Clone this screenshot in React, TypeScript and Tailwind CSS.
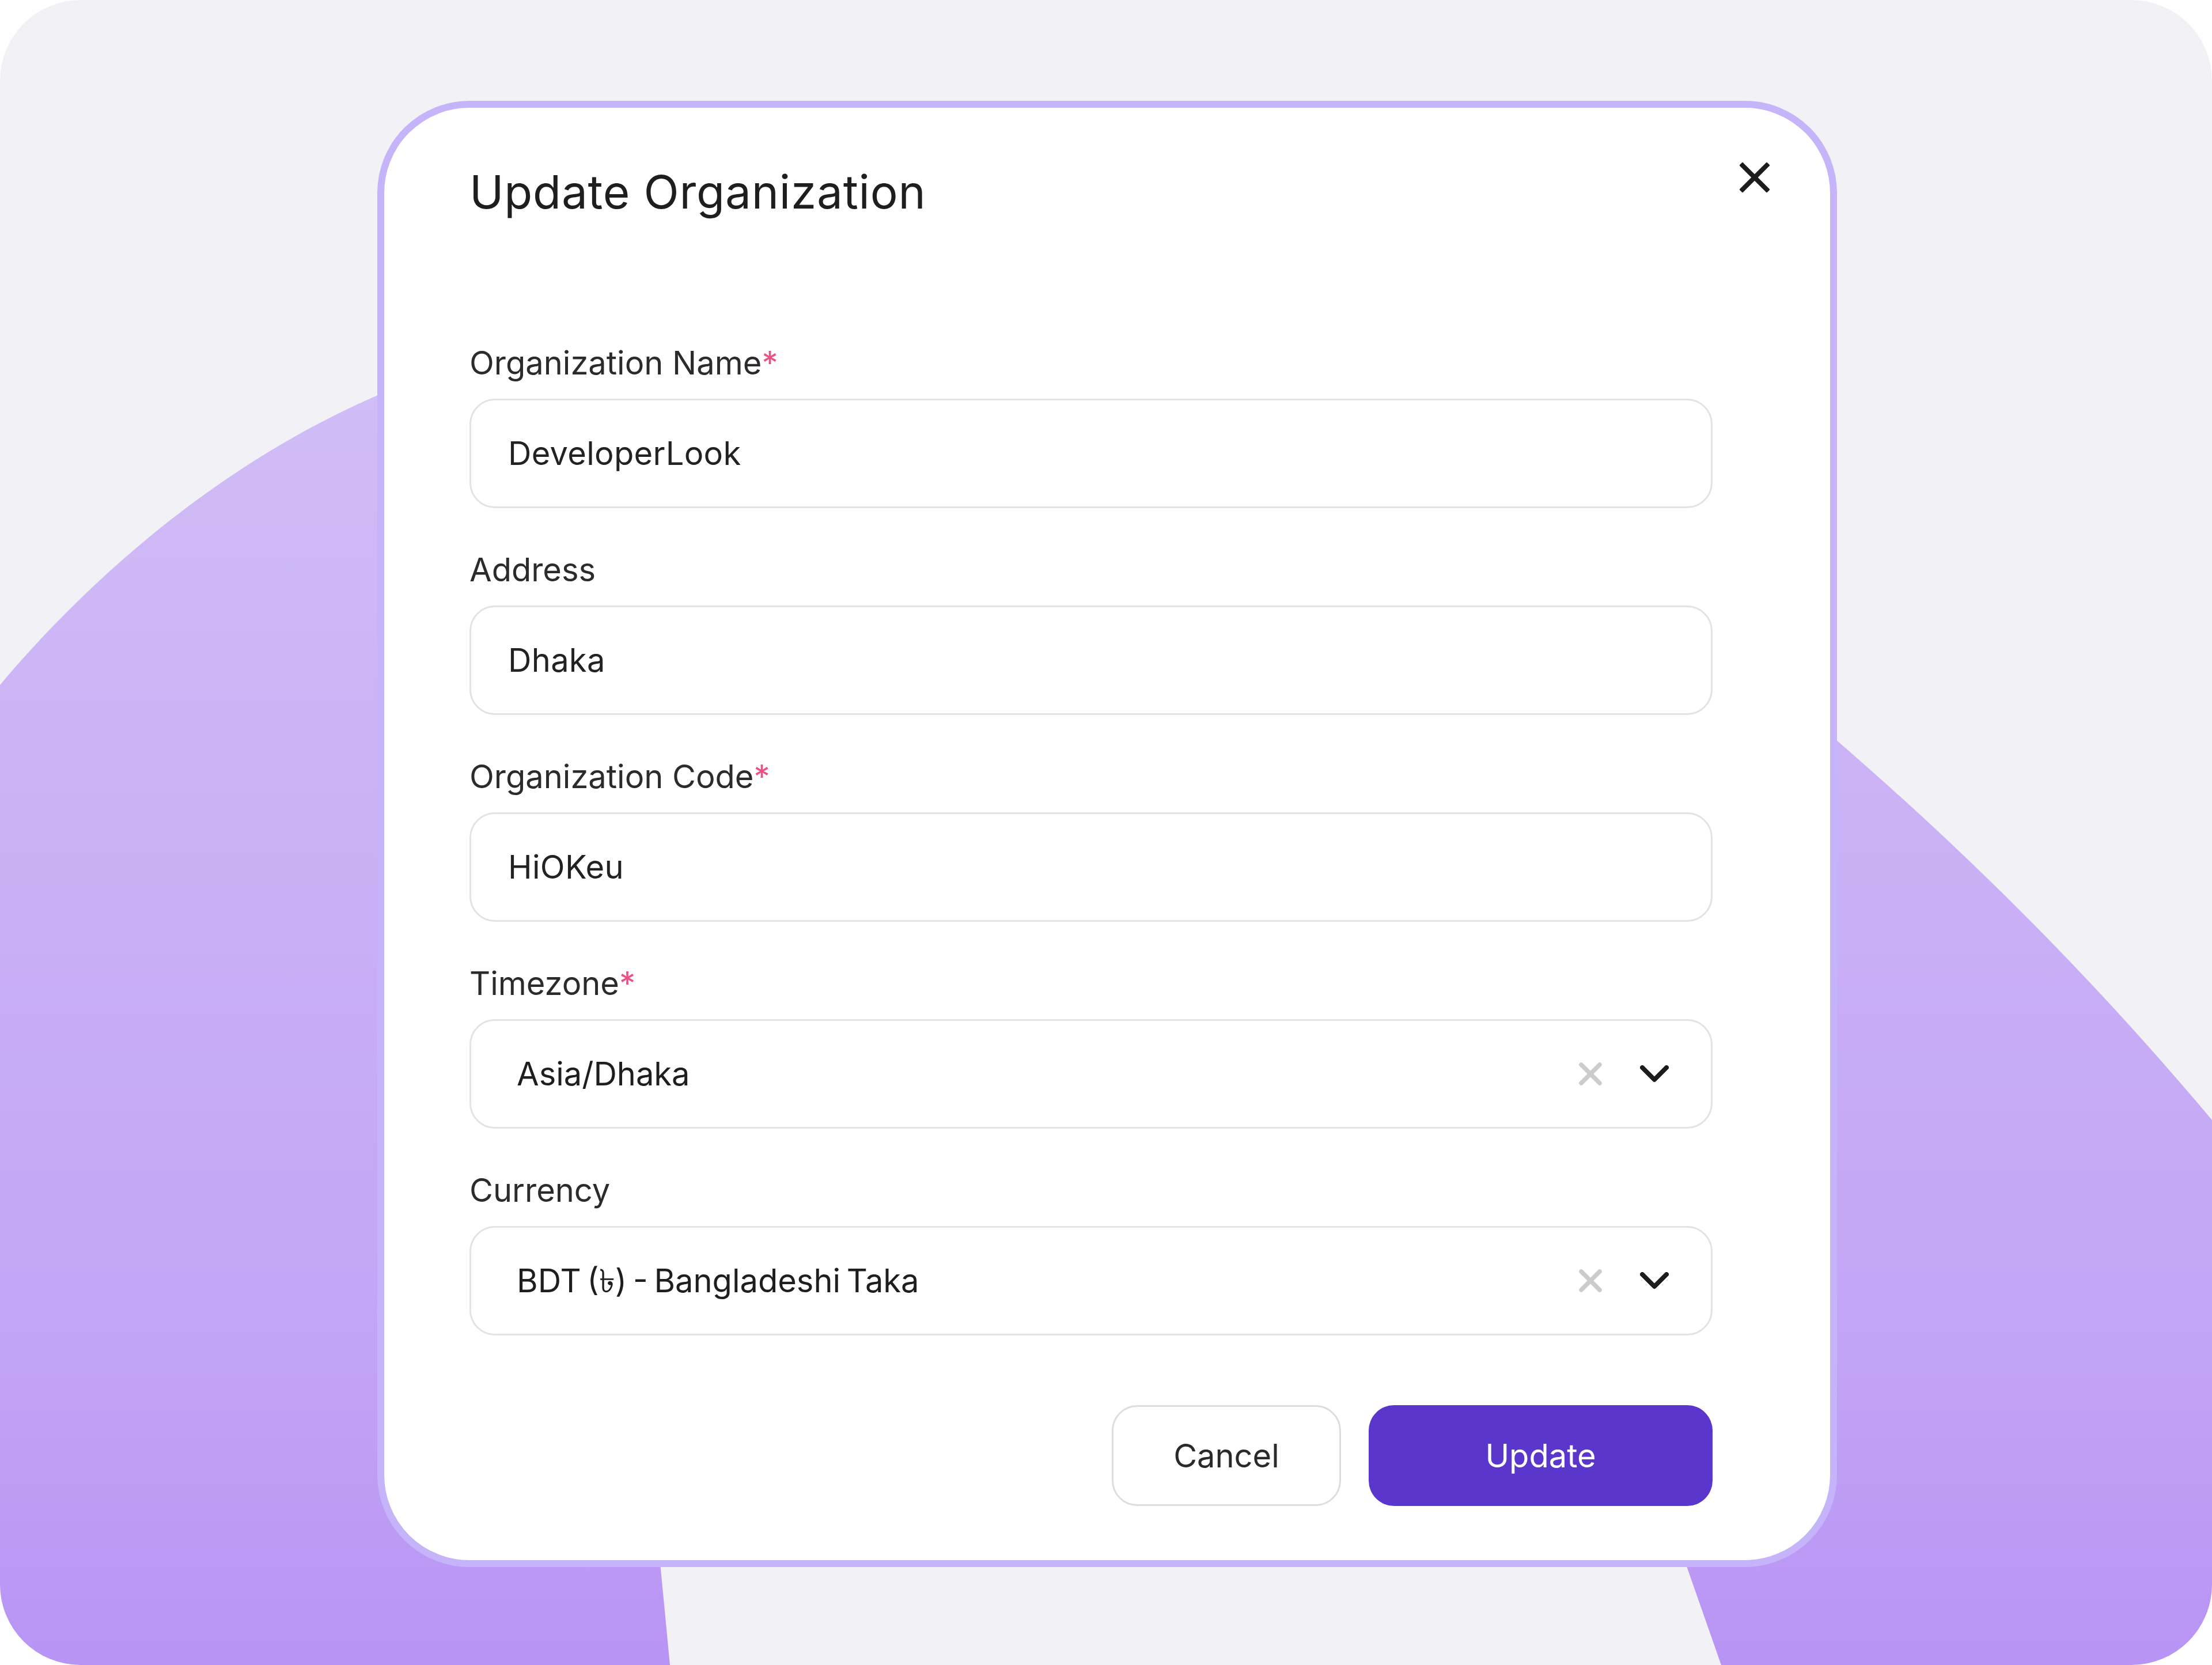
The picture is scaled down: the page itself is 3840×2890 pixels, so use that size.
import React from "react";

function ClearIcon() {
  return (
    <svg width="40" height="40" viewBox="0 0 40 40" className="block">
      <line x1="4" y1="4" x2="36" y2="36" stroke="#cccccc" strokeWidth="7.5" strokeLinecap="round" />
      <line x1="36" y1="4" x2="4" y2="36" stroke="#cccccc" strokeWidth="7.5" strokeLinecap="round" />
    </svg>
  );
}

function ChevronIcon() {
  return (
    <svg width="50" height="30" viewBox="0 0 50 30" className="block">
      <polyline points="4,4 25,25 46,4" fill="none" stroke="#1c1c1c" strokeWidth="8" strokeLinecap="round" strokeLinejoin="round" />
    </svg>
  );
}

function Label({ text, required }: { text: string; required?: boolean }) {
  return (
    <div className="h-[80px] text-[56px] leading-[80px] text-[#2b2b2b] mb-[22px] whitespace-nowrap">
      {text}
      {required && <span className="text-[#ef4d85]">*</span>}
    </div>
  );
}

function TextField({ label, value, required }: { label: string; value: string; required?: boolean }) {
  return (
    <div>
      <Label text={label} required={required} />
      <div className="h-[190px] border-[3px] border-[#e2e2e7] rounded-[44px] flex items-center pl-[64px] text-[56px] text-[#222222] tracking-[0.3px]">
        {value}
      </div>
    </div>
  );
}

function SelectField({ label, value, required }: { label: string; value: string; required?: boolean }) {
  return (
    <div>
      <Label text={label} required={required} />
      <div className="h-[190px] border-[3px] border-[#e2e2e7] rounded-[44px] flex items-center pl-[79px] pr-[73px] text-[56px] text-[#1e1e1e]">
        <div className="flex-1 whitespace-nowrap [word-spacing:-5px]">{value}</div>
        <div className="flex items-center gap-[66px]">
          <ClearIcon />
          <ChevronIcon />
        </div>
      </div>
    </div>
  );
}

export default function App() {
  return (
    <div className="w-[3840px] h-[2890px] bg-white font-[Inter,'DejaVu_Sans','Noto_Sans',sans-serif]">
      <div className="relative w-full h-full rounded-[140px] bg-[#f2f1f6] overflow-hidden">
        <svg className="absolute inset-0" width="3840" height="2890" viewBox="0 0 3840 2890">
          <defs>
            <linearGradient id="blobGrad" gradientUnits="userSpaceOnUse" x1="0" y1="700" x2="0" y2="2890">
              <stop offset="0" stopColor="#d0bcf6" />
              <stop offset="0.73" stopColor="#c3a5f5" />
              <stop offset="1" stopColor="#b894f4" />
            </linearGradient>
          </defs>
          <path
            d="M0 1189 C 150 1010, 400 780, 720 660 L 720 400 L 3100 400 L 3100 1200 L 3150 1252 C 3380 1448, 3610 1670, 3840 1944 L 3840 2890 L 2988 2890 L 2926 2713 L 2834 2450 L 1121 2450 L 1146 2713 L 1163 2890 L 0 2890 Z"
            fill="url(#blobGrad)"
          />
        </svg>
        <div className="relative pt-[175px] pl-[655px]">
          <div className="relative w-[2534px] bg-white border-[12px] border-[#c6b4fb] rounded-[160px] pt-[106px] pb-[94px] pl-[148px] pr-[204px]">
            <button className="absolute top-[95px] right-[105px] w-[52px] h-[52px] flex items-center justify-center">
              <svg width="52" height="52" viewBox="0 0 52 52" className="block">
                <line x1="5" y1="5" x2="47" y2="47" stroke="#1c1c1c" strokeWidth="8" strokeLinecap="square" />
                <line x1="47" y1="5" x2="5" y2="47" stroke="#1c1c1c" strokeWidth="8" strokeLinecap="square" />
              </svg>
            </button>
            <h1 className="text-[80px] leading-[80px] text-[#1e1e1e] font-normal whitespace-nowrap tracking-[0.8px]">Update Organization</h1>
            <div className="mt-[217px] flex flex-col gap-[67px]">
              <TextField label="Organization Name" value="DeveloperLook" required />
              <TextField label="Address" value="Dhaka" />
              <TextField label="Organization Code" value="HiOKeu" required />
              <SelectField label="Timezone" value="Asia/Dhaka" required />
              <SelectField label="Currency" value="BDT (৳) - Bangladeshi Taka" />
            </div>
            <div className="mt-[121px] flex justify-end gap-[48px]">
              <button className="w-[398px] h-[175px] border-[3px] border-[#dcdce1] rounded-[44px] bg-white text-[56px] text-[#2a2a2a]">
                Cancel
              </button>
              <button className="w-[597px] h-[175px] rounded-[44px] bg-[#5b36cc] text-[56px] text-white">
                Update
              </button>
            </div>
          </div>
        </div>
      </div>
    </div>
  );
}
